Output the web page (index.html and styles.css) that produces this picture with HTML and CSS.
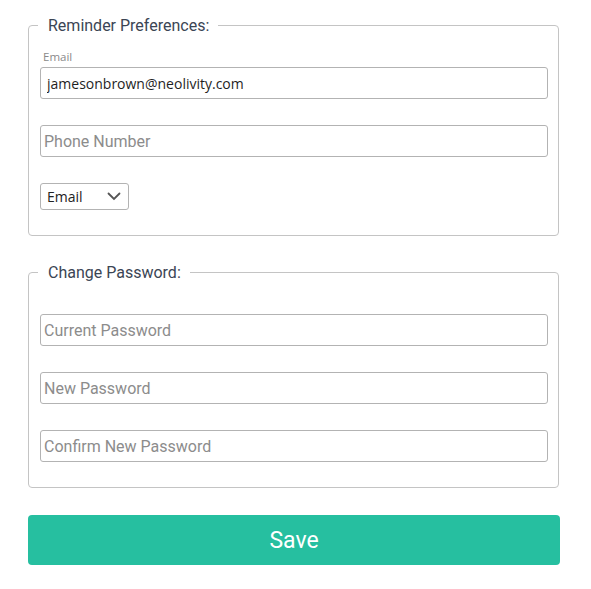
FILE: index.html
```html
<!DOCTYPE html>
<html>
<head>
<meta charset="utf-8">
<link rel="stylesheet" href="styles.css">
</head>
<body>
<form class="form">
  <fieldset class="group">
    <legend class="group-title">Reminder Preferences:</legend>
    <label class="field-label">Email</label>
    <input class="text-input value" type="text" value="jamesonbrown@neolivity.com">
    <input class="text-input" type="text" placeholder="Phone Number">
    <div class="select">
      <span class="select-value">Email</span>
      <svg class="chevron" width="14" height="9" viewBox="0 0 14 9"><path d="M1.5 1.5 L7 7 L12.5 1.5" fill="none" stroke="#555" stroke-width="1.8" stroke-linecap="round"/></svg>
    </div>
  </fieldset>
  <fieldset class="group group-pw">
    <legend class="group-title">Change Password:</legend>
    <input class="text-input" type="password" placeholder="Current Password">
    <input class="text-input" type="password" placeholder="New Password">
    <input class="text-input" type="password" placeholder="Confirm New Password">
  </fieldset>
  <button class="save" type="button">Save</button>
</form>
</body>
</html>
```
FILE: styles.css
```css
html, body {
  margin: 0;
  padding: 0;
  background: #fff;
}
body {
  font-family: Roboto, "Liberation Sans", sans-serif;
}
.form {
  width: 532px;
  padding: 16px 0 0 28px;
  display: flex;
  flex-direction: column;
}
.group {
  width: 531px;
  box-sizing: border-box;
  margin: 0;
  border: 1px solid #c4c4c4;
  border-radius: 4px;
  padding: 15px 10px 25px 11px;
  display: flex;
  flex-direction: column;
}
.group-pw {
  margin-top: 27px;
  padding-top: 32px;
}
.group-title {
  margin-left: -2px;
  padding: 0 9px 0 10px;
  font-size: 16px;
  line-height: 19px;
  color: #3b4554;
}
.field-label {
  font-family: "Open Sans", sans-serif;
  font-size: 11.5px;
  line-height: 14px;
  color: #8a8a8a;
  margin: 0 0 3px 3px;
}
.text-input {
  box-sizing: border-box;
  width: 508px;
  height: 32px;
  margin: 0 0 26px 0;
  border: 1px solid #b3b3b3;
  border-radius: 3px;
  padding: 0 3px;
  font-family: Roboto, sans-serif;
  font-size: 16px;
  color: #222;
  outline: none;
}
.text-input::placeholder {
  color: #8c8c8c;
}
.text-input.value {
  font-family: "Open Sans", sans-serif;
  font-size: 14px;
  padding-left: 6px;
  color: #1f1f1f;
}
.select {
  box-sizing: border-box;
  width: 89px;
  height: 27px;
  border: 1px solid #b3b3b3;
  border-radius: 3px;
  display: flex;
  align-items: center;
  justify-content: space-between;
  padding: 0 7px 0 6px;
}
.select-value {
  font-family: "Open Sans", sans-serif;
  font-size: 14px;
  color: #222;
}
.group-pw .text-input:last-child {
  margin-bottom: 0;
}
.save {
  margin-top: 27px;
  width: 532px;
  height: 50px;
  border: none;
  border-radius: 4px;
  background: #26bfa0;
  color: #fff;
  font-family: Roboto, sans-serif;
  font-size: 23px;
  cursor: pointer;
}
```
